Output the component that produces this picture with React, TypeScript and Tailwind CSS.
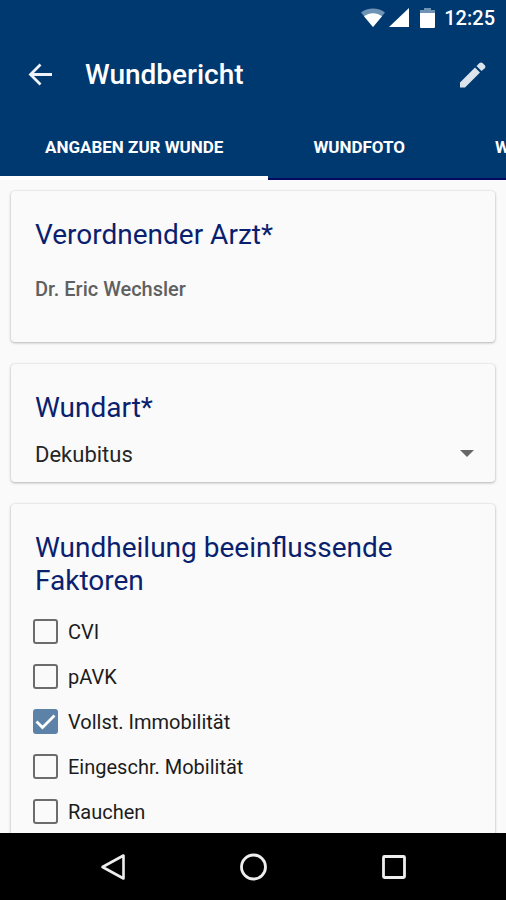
import { useState } from "react";
import type { ReactNode } from "react";

const TABS = ["ANGABEN ZUR WUNDE", "WUNDFOTO", "W"];

const FACTORS = [
  { id: "cvi", label: "CVI", checked: false },
  { id: "pavk", label: "pAVK", checked: false },
  { id: "immobil", label: "Vollst. Immobilität", checked: true },
  { id: "mobil", label: "Eingeschr. Mobilität", checked: false },
  { id: "rauchen", label: "Rauchen", checked: false },
];

function StatusBar() {
  return (
    <div className="flex h-9 items-center justify-end pr-[11px] text-white">
      <svg className="h-5 w-6" viewBox="0 0 24 20" aria-hidden="true">
        <path d="M0 4.5C6.5-.8 17.500-.8 24 4.500L12 19Z" fill="#6f93b5" />
        <path d="M3 8.200C8.500 4.200 15.500 4.200 21 8.200L12 19Z" fill="#fff" />
      </svg>
      <svg className="ml-1 h-5 w-5" viewBox="0 0 20 20" aria-hidden="true">
        <path d="M20 0V19H0Z" fill="#fff" />
      </svg>
      <svg className="ml-[11px] h-5 w-[15px]" viewBox="0 0 15 20" aria-hidden="true">
        <path d="M4 0H11V2H15V6H0V2H4Z" fill="#6f93b5" />
        <path d="M0 5H15V19Q15 20 14 20H1Q0 20 0 19Z" fill="#fff" />
      </svg>
      <span className="ml-[9px] text-[20px] leading-6 font-medium">12:25</span>
    </div>
  );
}

function Card({ className, children }: { className: string; children: ReactNode }) {
  return (
    <section
      className={
        "shrink-0 rounded-[4px] bg-[#fafafa] px-6 pt-[27px] shadow-[0_1px_3px_rgba(0,0,0,0.26),0_0_2px_rgba(0,0,0,0.12)] " +
        className
      }
    >
      {children}
    </section>
  );
}

function Checkbox({ id, label, initial }: { id: string; label: string; initial: boolean }) {
  const [checked, setChecked] = useState(initial);
  return (
    <li className="flex h-[45px] items-center gap-[10px]">
      <span className="relative -ml-[2px] h-[25px] w-[25px] shrink-0">
        <input
          id={id}
          type="checkbox"
          checked={checked}
          onChange={(e) => setChecked(e.target.checked)}
          className="block h-[25px] w-[25px] appearance-none rounded-[3px] border-[2px] border-[#6c6c6c] checked:border-[#5c82a8] checked:bg-[#5c82a8]"
        />
        {checked && (
          <svg className="pointer-events-none absolute inset-0" viewBox="0 0 25 25" aria-hidden="true">
            <path d="M3.500 12.500L9.500 18.500L21.500 6.500" fill="none" stroke="#fff" strokeWidth="2.800" />
          </svg>
        )}
      </span>
      <label htmlFor={id} className="text-[20px] leading-6 text-[#1c1c1c]">
        {label}
      </label>
    </li>
  );
}

export default function App() {
  const [active, setActive] = useState(0);
  return (
    <div className="flex h-screen flex-col overflow-hidden bg-[#fafafa] font-[Roboto,sans-serif]">
      <header className="shrink-0 bg-[#003870] text-white">
        <StatusBar />
        <div className="flex h-[78px] items-center pr-5 pl-7">
          <button type="button" aria-label="Zurück" className="h-6 w-6">
            <svg viewBox="0 0 24 24" aria-hidden="true">
              <path d="M24 11.500H3M12.500 1.500L2.500 11.500L12.500 21.500" fill="none" stroke="#eef3f8" strokeWidth="2.800" />
            </svg>
          </button>
          <h1 className="ml-[33px] flex-1 text-[28px] leading-8 font-medium">Wundbericht</h1>
          <button type="button" aria-label="Bearbeiten" className="h-[26px] w-[26px]">
            <svg viewBox="0 0 26 26" fill="#dbe3ec" aria-hidden="true">
              <path d="M0 20.500L15 5.500L20 10.500L5 25.500H0ZM16.500 4L19.500 1Q21 -.2 22.500 1L24.800 3.300Q26 4.800 24.800 6.200L21.500 9Z" />
            </svg>
          </button>
        </div>
        <nav className="flex h-[66px] overflow-hidden shadow-[inset_0_-2px_0_#000a62]">
          {TABS.map((tab, i) => (
            <button
              key={tab}
              type="button"
              onClick={() => setActive(i)}
              className={
                "shrink-0 border-b-4 px-[45px] pt-1 text-[17px] leading-6 font-bold whitespace-nowrap " +
                (i === active ? "border-white" : "border-transparent")
              }
            >
              {tab}
            </button>
          ))}
        </nav>
      </header>

      <main className="flex min-h-0 flex-1 flex-col gap-[22px] overflow-hidden px-[11px] pt-[11px]">
        <Card className="pb-[41px]">
          <h2 className="text-[28px] leading-[33px] text-[#0b1f6f]">Verordnender Arzt*</h2>
          <p className="mt-[26px] text-[20px] leading-6 font-medium text-[#606060]">Dr. Eric Wechsler</p>
        </Card>

        <Card className="pb-3">
          <h2 className="text-[28px] leading-[33px] text-[#0b1f6f]">
            <label htmlFor="wundart">Wundart*</label>
          </h2>
          <div className="relative mt-[14px]">
            <select
              id="wundart"
              defaultValue="Dekubitus"
              className="block h-8 w-full appearance-none bg-transparent text-[22px] text-[#262626]"
            >
              <option>Dekubitus</option>
            </select>
            <svg
              className="pointer-events-none absolute top-3 right-[-3px] h-[7px] w-[14px]"
              viewBox="0 0 14 7"
              aria-hidden="true"
            >
              <path d="M0 0H14L7 7Z" fill="#666" />
            </svg>
          </div>
        </Card>

        <Card className="pb-6">
          <h2 className="text-[28px] leading-[33px] text-[#0b1f6f]">Wundheilung beeinflussende Faktoren</h2>
          <ul className="mt-3">
            {FACTORS.map((f) => (
              <Checkbox key={f.id} id={f.id} label={f.label} initial={f.checked} />
            ))}
          </ul>
        </Card>
      </main>

      <footer className="z-10 flex h-[67px] shrink-0 items-center justify-center bg-black">
        <button type="button" aria-label="Zurück" className="flex w-[140px] justify-center">
          <svg className="h-7 w-7" viewBox="0 0 28 28" aria-hidden="true">
            <path d="M24.500 2.500V25.500L3.500 14Z" fill="none" stroke="#eee" strokeWidth="2.600" strokeLinejoin="round" />
          </svg>
        </button>
        <button type="button" aria-label="Startbildschirm" className="flex w-[140px] justify-center">
          <svg className="h-7 w-7" viewBox="0 0 28 28" aria-hidden="true">
            <circle cx="14.500" cy="14" r="12" fill="none" stroke="#eee" strokeWidth="2.800" />
          </svg>
        </button>
        <button type="button" aria-label="Übersicht" className="flex w-[140px] justify-center">
          <svg className="h-7 w-7" viewBox="0 0 28 28" aria-hidden="true">
            <rect x="4.500" y="3.500" width="21" height="21" rx="1" fill="none" stroke="#eee" strokeWidth="2.800" />
          </svg>
        </button>
      </footer>
    </div>
  );
}
